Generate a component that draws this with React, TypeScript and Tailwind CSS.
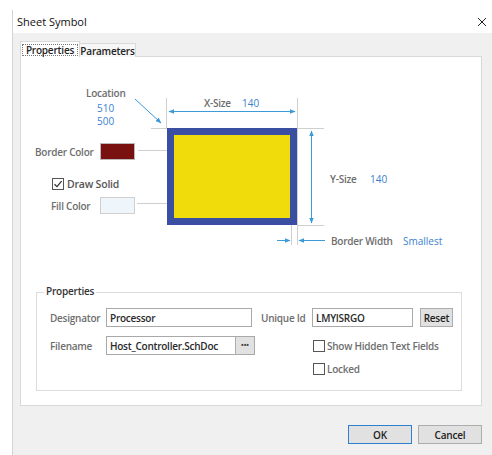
import React from 'react'

const label = "text-[10px] tracking-[-0.25px] font-semibold text-[#6e6e6e] leading-none whitespace-nowrap"
const value = "text-[10px] text-[#3b7fd0] leading-none whitespace-nowrap"
const btnText = "text-[10px] tracking-[-0.2px] font-semibold text-[#222] leading-none"

function Check({ checked }: { checked?: boolean }) {
  return (
    <span className="w-[12px] h-[12px] border border-[#555] bg-white flex items-center justify-center">
      {checked && (
        <svg width="10" height="10" viewBox="0 0 10 10">
          <path d="M1.5 5.2 L4 7.6 L8.6 2.2" stroke="#333" strokeWidth="1.3" fill="none" />
        </svg>
      )}
    </span>
  )
}

function Diagram() {
  return (
    <div className="relative h-[235px]">
      {/* drawing: lines, arrows, symbol */}
      <svg className="absolute left-0 top-0" width="460" height="235">
        <defs>
          <marker id="ah" viewBox="0 0 10 10" refX="9" refY="5" markerWidth="6" markerHeight="6" orient="auto-start-reverse">
            <path d="M0 1 L10 5 L0 9 z" fill="#3d9ad8" />
          </marker>
        </defs>
        {/* extension lines */}
        <g stroke="#cfcfcf" strokeWidth="1">
          <line x1="145.5" y1="41" x2="145.5" y2="71" />
          <line x1="130" y1="71.5" x2="146" y2="71.5" />
          <line x1="276.5" y1="41" x2="276.5" y2="188" />
          <line x1="270.5" y1="168" x2="270.5" y2="188" />
          <line x1="276" y1="71.5" x2="303" y2="71.5" />
          <line x1="276" y1="168.5" x2="303" y2="168.5" />
          <line x1="117" y1="93.5" x2="146" y2="93.5" />
          <line x1="116" y1="146.5" x2="146" y2="146.5" />
        </g>
        {/* symbol */}
        <rect x="149.5" y="74.5" width="123" height="90" fill="#f0dc0a" stroke="#3a4fa1" strokeWidth="7" />
        {/* dimension arrows */}
        <g stroke="#3d9ad8" strokeWidth="1" fill="none">
          <line x1="114" y1="42" x2="140" y2="66" markerEnd="url(#ah)" />
          <line x1="148" y1="54.5" x2="274" y2="54.5" markerStart="url(#ah)" markerEnd="url(#ah)" />
          <line x1="290.5" y1="74" x2="290.5" y2="166" markerStart="url(#ah)" markerEnd="url(#ah)" />
          <line x1="256" y1="183.5" x2="269" y2="183.5" markerEnd="url(#ah)" />
          <line x1="304" y1="183.5" x2="278" y2="183.5" markerEnd="url(#ah)" />
        </g>
      </svg>

      <span className={`absolute left-[65px] top-[31px] ${label}`}>Location</span>
      <span className={`absolute left-[76px] top-[46px] ${value}`}>510</span>
      <span className={`absolute left-[76px] top-[59px] ${value}`}>500</span>

      <span className={`absolute left-[183px] top-[41px] ${label}`}>X-Size</span>
      <span className={`absolute left-[221px] top-[41px] ${value}`}>140</span>

      <span className={`absolute left-[309px] top-[117px] ${label}`}>Y-Size</span>
      <span className={`absolute left-[349px] top-[117px] ${value}`}>140</span>

      <span className={`absolute left-[310px] top-[179px] ${label}`}>Border Width</span>
      <span className={`absolute left-[382px] top-[179px] ${value}`}>Smallest</span>

      <span className={`absolute left-[14px] top-[90px] ${label}`}>Border Color</span>
      <div className="absolute left-[79px] top-[86px] w-[35px] h-[17px] bg-[#7a1111] border border-[#b9b9b9]" />

      <div className="absolute left-[31px] top-[121px] flex items-center gap-[3px]">
        <Check checked />
        <span className="text-[10.5px] tracking-[-0.2px] font-semibold text-[#555] leading-none">Draw Solid</span>
      </div>

      <span className={`absolute left-[30px] top-[144px] ${label}`}>Fill Color</span>
      <div className="absolute left-[79px] top-[140px] w-[35px] h-[17px] bg-[#eef6fc] border border-[#cfcfcf]" />
    </div>
  )
}

function Field({ text, w, dots }: { text: string; w: string; dots?: boolean }) {
  return (
    <div className={`${w} h-[19px] border border-[#a9a9a9] bg-white flex items-center`}>
      <span className="flex-1 pl-[3px] text-[10px] tracking-[-0.25px] font-semibold text-[#2a2a2a] leading-none whitespace-nowrap">{text}</span>
      {dots && (
        <span className="w-[19px] h-[17px] bg-[#e1e1e1] border-l border-[#adadad] flex items-center justify-center text-[7px] font-bold text-[#444] leading-none">
          •••
        </span>
      )}
    </div>
  )
}

export default function App() {
  return (
    <div className="w-[492px] h-[455px] bg-white pl-[12px] pt-[10px] overflow-hidden" style={{ fontFamily: '"Open Sans", "Noto Sans", sans-serif' }}>
      <div className="h-full border-l border-[#d4d4d4] flex flex-col">
        {/* title bar */}
        <div className="h-[23px] bg-white flex items-center justify-between pl-[4px] pr-[4px]">
          <span className="text-[11px] text-[#111] leading-none">Sheet Symbol</span>
          <svg width="10" height="10" viewBox="0 0 10 10" className="mr-[1px]">
            <path d="M1 1 L9 9 M9 1 L1 9" stroke="#222" strokeWidth="1" />
          </svg>
        </div>

        {/* body */}
        <div className="flex-1 bg-[#f0f0f0] pl-[7px] pr-[10px] pt-[8px]">
          {/* tabs */}
          <div className="flex items-end h-[16px] relative z-10">
            <div className="h-[16px] w-[60px] bg-white border border-b-0 border-[#d9d9d9] px-[1px] pt-[2px]">
              <div className={`h-[12px] border border-dotted border-[#777] flex items-center justify-center ${btnText}`}>
                Properties
              </div>
            </div>
            <div className={`h-[14px] w-[56px] bg-[#f7f7f7] border border-l-0 border-b-0 border-[#d9d9d9] flex items-center justify-center ${btnText}`}>
              Parameters
            </div>
          </div>

          {/* tab panel */}
          <div className="h-[350px] bg-white border border-[#d9d9d9] -mt-[1px]">
            <Diagram />

            {/* group box */}
            <div className="relative ml-[15px] w-[426px] h-[99px] border border-[#dcdcdc] pl-[13px] pt-[15px]">
              <span className={`absolute left-[7px] -top-[7px] bg-white px-[2px] ${btnText} text-[#333]`}>Properties</span>

              <div className="flex items-center h-[19px]">
                <span className={`w-[56px] ${label}`}>Designator</span>
                <Field text="Processor" w="w-[146px]" />
                <span className={`ml-[9px] w-[51px] ${label}`}>Unique Id</span>
                <Field text="LMYISRGO" w="w-[101px]" />
                <div className={`ml-[7px] w-[33px] h-[19px] bg-[#e1e1e1] border border-[#adadad] flex items-center justify-center ${btnText}`}>
                  Reset
                </div>
              </div>

              <div className="flex items-center h-[19px] mt-[9px]">
                <span className={`w-[56px] ${label}`}>Filename</span>
                <Field text="Host_Controller.SchDoc" w="w-[149px]" dots />
                <div className="ml-[58px] flex items-center gap-[2px]">
                  <Check />
                  <span className={label}>Show Hidden Text Fields</span>
                </div>
              </div>

              <div className="flex items-center h-[12px] mt-[8px] pl-[263px] gap-[2px]">
                <Check />
                <span className={label}>Locked</span>
              </div>
            </div>
          </div>

          {/* buttons */}
          <div className="flex justify-end gap-[6px] mt-[19px]">
            <div className={`w-[64px] h-[19px] bg-[#e1e1e1] border border-[#2f7fd0] flex items-center justify-center ${btnText}`}>OK</div>
            <div className={`w-[64px] h-[19px] bg-[#e1e1e1] border border-[#adadad] flex items-center justify-center ${btnText}`}>Cancel</div>
          </div>
        </div>
      </div>
    </div>
  )
}
